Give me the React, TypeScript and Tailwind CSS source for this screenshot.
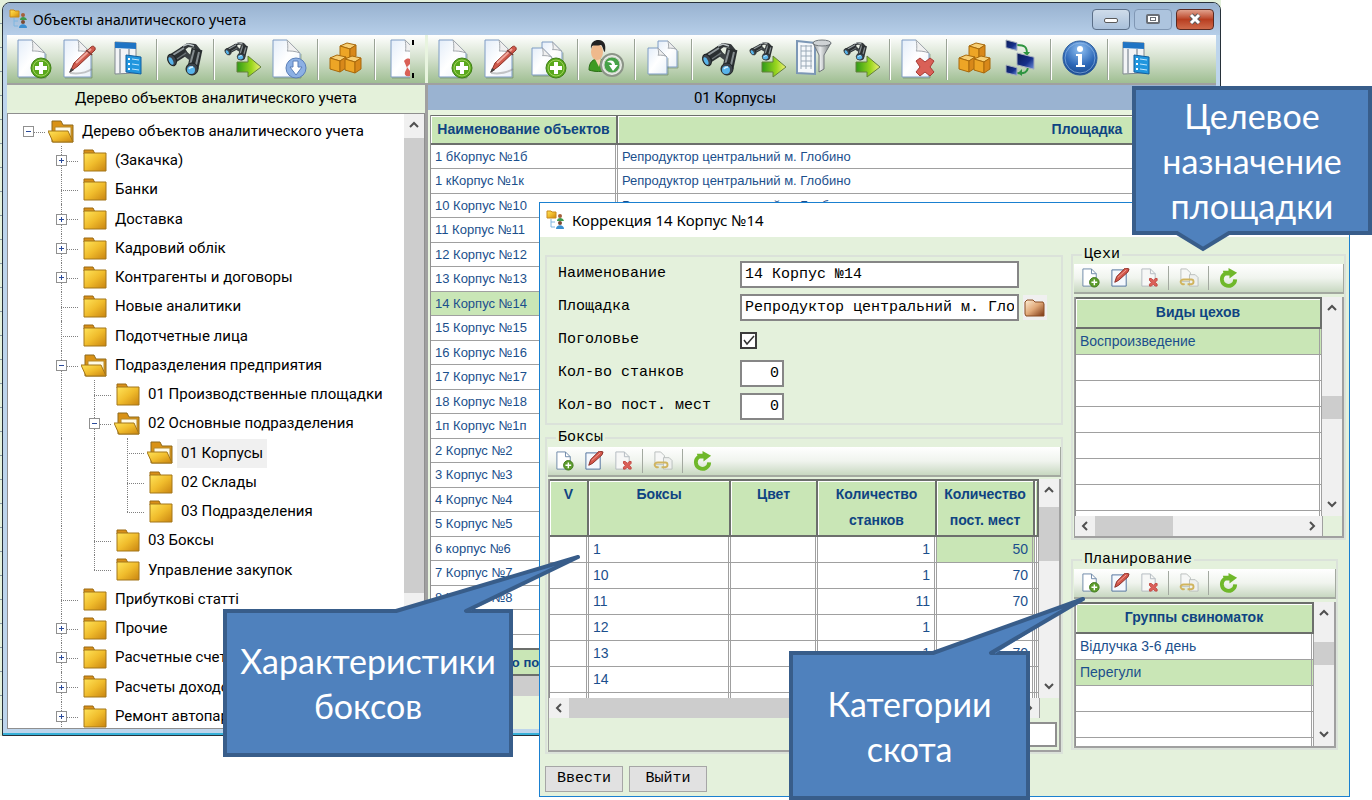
import type { ReactNode } from "react";
import { clsx } from "clsx";

type TreeItem = {
  label: string;
  level: number;
  state?: "open" | "closed";
  folder?: "open";
  guides?: number[];
  last?: boolean;
  selected?: boolean;
};

const TREE: TreeItem[] = [
  { label: "Дерево объектов аналитического учета", level: 0, state: "open", folder: "open" },
  { label: "(Закачка)", level: 1, state: "closed" },
  { label: "Банки", level: 1 },
  { label: "Доставка", level: 1, state: "closed" },
  { label: "Кадровий облік", level: 1, state: "closed" },
  { label: "Контрагенты и договоры", level: 1, state: "closed" },
  { label: "Новые аналитики", level: 1 },
  { label: "Подотчетные лица", level: 1 },
  { label: "Подразделения предприятия", level: 1, state: "open", folder: "open" },
  { label: "01 Производственные площадки", level: 2, guides: [1] },
  { label: "02 Основные подразделения", level: 2, state: "open", folder: "open", guides: [1] },
  { label: "01 Корпусы", level: 3, folder: "open", guides: [1, 2], selected: true },
  { label: "02 Склады", level: 3, guides: [1, 2] },
  { label: "03 Подразделения", level: 3, guides: [1, 2], last: true },
  { label: "03 Боксы", level: 2, guides: [1] },
  { label: "Управление закупок", level: 2, guides: [1], last: true },
  { label: "Прибуткові статті", level: 1 },
  { label: "Прочие", level: 1, state: "closed" },
  { label: "Расчетные счета", level: 1, state: "closed" },
  { label: "Расчеты доходов", level: 1, state: "closed" },
  { label: "Ремонт автопарка", level: 1, state: "closed" },
];

const SITE = "Репродуктор центральний м. Глобино";

const OBJECTS = [
  { name: "1 бКорпус №1б", site: SITE },
  { name: "1 кКорпус №1к", site: SITE },
  { name: "10 Корпус №10", site: SITE },
  { name: "11 Корпус №11" },
  { name: "12 Корпус №12" },
  { name: "13 Корпус №13" },
  { name: "14 Корпус №14", selected: true },
  { name: "15 Корпус №15" },
  { name: "16 Корпус №16" },
  { name: "17 Корпус №17" },
  { name: "18 Корпус №18" },
  { name: "1п Корпус №1п" },
  { name: "2 Корпус №2" },
  { name: "3 Корпус №3" },
  { name: "4 Корпус №4" },
  { name: "5 Корпус №5" },
  { name: "6 корпус №6" },
  { name: "7 Корпус №7" },
  { name: "8 Корпус №8" },
  { name: "9 Корпус №9" },
  { name: "" },
];

const BOXES = [
  ["1", "1", "50"],
  ["10", "1", "70"],
  ["11", "11", "70"],
  ["12", "1", "70"],
  ["13", "1", "70"],
  ["14", "1", "70"],
  ["", "", ""],
];

/* ---------- icons ---------- */

function IconDefs() {
  return (
    <svg className="absolute size-0" aria-hidden="true">
      <defs>
        <linearGradient id="paper" x1="0" y1="0" x2="1" y2="1">
          <stop offset="0" stopColor="#e3edf9" />
          <stop offset="0.5" stopColor="#ffffff" />
          <stop offset="1" stopColor="#e9f0f8" />
        </linearGradient>
        <linearGradient id="folder" x1="0" y1="0" x2="1" y2="1">
          <stop offset="0" stopColor="#ffe45a" />
          <stop offset="0.5" stopColor="#f0bc2c" />
          <stop offset="1" stopColor="#c98410" />
        </linearGradient>
        <linearGradient id="leather" x1="0" y1="0" x2="1" y2="1">
          <stop offset="0" stopColor="#fff0d8" />
          <stop offset="0.5" stopColor="#e0a878" />
          <stop offset="1" stopColor="#7a3410" />
        </linearGradient>
        <linearGradient id="arrow" x1="0" y1="0" x2="1" y2="0">
          <stop offset="0" stopColor="#2f9a18" />
          <stop offset="0.6" stopColor="#9ad61e" />
          <stop offset="1" stopColor="#f2f27a" />
        </linearGradient>
        <linearGradient id="screen" x1="0" y1="0" x2="1" y2="1">
          <stop offset="0" stopColor="#0a1a55" />
          <stop offset="0.6" stopColor="#16308a" />
          <stop offset="1" stopColor="#6f92dd" />
        </linearGradient>
        <radialGradient id="info" cx="0.5" cy="0.25" r="0.8">
          <stop offset="0" stopColor="#8fc0f2" />
          <stop offset="0.6" stopColor="#2d68b8" />
          <stop offset="1" stopColor="#164488" />
        </radialGradient>
        <linearGradient id="steel" x1="0" y1="0" x2="1" y2="0">
          <stop offset="0" stopColor="#8b9092" />
          <stop offset="0.4" stopColor="#e9eced" />
          <stop offset="1" stopColor="#6f7577" />
        </linearGradient>
      </defs>
    </svg>
  );
}

function Page({ x = 3, y = 1, w = 27, h = 37 }: { x?: number; y?: number; w?: number; h?: number }) {
  const f = w * 0.48;
  return (
    <g strokeLinejoin="round">
      <path d={`M${x + 1} ${y + h + 1}h${w}v-${h - f}`} fill="none" stroke="#5c7556" strokeOpacity="0.5" />
      <path
        d={`M${x} ${y}h${w - f}l${f} ${f}v${h - f}h-${w}z`}
        fill="url(#paper)"
        stroke="#7f9cc4"
      />
      <path
        d={`M${x + w - f} ${y}c1 4 1 ${f - 2} 0 ${f - 2}c3 0 8 0 ${f} 2z`}
        fill="#f0f0f0"
        stroke="#a3a8ae"
      />
    </g>
  );
}

function PlusBadge({ cx = 26, cy = 29, r = 10 }: { cx?: number; cy?: number; r?: number }) {
  return (
    <g>
      <circle cx={cx} cy={cy} r={r} fill="#5aa81c" stroke="#3f7f16" />
      <circle cx={cx} cy={cy} r={r - 2} fill="none" stroke="#9fd05c" />
      <path d={`M${cx} ${cy - 6}v12M${cx - 6} ${cy}h12`} stroke="#fff" strokeWidth="4" />
    </g>
  );
}

function Pen() {
  return (
    <g>
      <path d="M8 34c8 1 16 0 22-4" fill="none" stroke="#777" strokeOpacity="0.4" strokeWidth="2" />
      <path d="M8 33l4-9L29 8c2-2 5 0 4 3L16 27z" fill="#cf5a4c" stroke="#8d3026" />
      <path d="M14 24L29 10" stroke="#f1a79c" strokeWidth="2" />
      <path d="M24 11l6 5" stroke="#7d3a34" strokeWidth="1.5" />
      <path d="M7 34l2-5 3 2z" fill="#444" />
    </g>
  );
}

function RedCross() {
  return (
    <path
      d="M17 22l4-3 5 4 5-4 4 3-4 6 4 5-4 4-5-4-5 4-4-4 4-5z"
      fill="#d96057"
      stroke="#a83c36"
    />
  );
}

function Glasses() {
  return (
    <g fill="none">
      <path d="M15 11l7-5 7 1 4 5" stroke="#33383a" strokeWidth="4" strokeLinejoin="round" />
      <path d="M20 11L6 20" stroke="#2a2f31" strokeWidth="10" />
      <path d="M31 10l-4 19" stroke="#2a2f31" strokeWidth="11" />
      <path d="M18 14l8 6" stroke="#3c4244" strokeWidth="5" />
      <path d="M18 9L7 16" stroke="#90989b" strokeWidth="2" />
      <path d="M20 14l-9 6" stroke="#6a7275" strokeWidth="1.5" />
      <path d="M28 11l-4 15M33 13l-3 13" stroke="#848c8f" strokeWidth="2" />
      <path d="M17 7l5-2 6 2" stroke="#bcc3c5" strokeWidth="1.500" />
      <ellipse cx="6" cy="21" rx="4" ry="6" transform="rotate(-25 6 21)" fill="#3c434a" stroke="#1d2224" />
      <ellipse cx="5" cy="22" rx="2" ry="4" transform="rotate(-25 5 22)" fill="#58b4ea" />
      <ellipse cx="26" cy="30" rx="6" ry="6" fill="#3c434a" stroke="#1d2224" />
      <ellipse cx="25" cy="31" rx="4" ry="4" fill="#58b4ea" />
      <path d="M23 30c1-2 2-2 4-2" stroke="#d5f0ff" strokeWidth="1.500" />
    </g>
  );
}

function FindNext() {
  return (
    <g>
      <g transform="translate(1 1) scale(0.66 0.56)">
        <Glasses />
      </g>
      <path d="M14 23h11v-6l13 11-13 10v-5H14z" fill="url(#arrow)" stroke="#64803c" />
    </g>
  );
}

function FormWindow() {
  return (
    <g>
      <path d="M6 3l21 1v30L6 35z" fill="#f2f4f6" stroke="#7f878f" />
      <path d="M6 3l21 1v6L6 9z" fill="#1f74c4" />
      <path d="M11 10v24M20 10v23" stroke="#aab2ba" strokeWidth="2" />
      <path d="M17 16l15 2v17l-15-2z" fill="#2196de" stroke="#125f9e" />
      <path d="M19 20h2M19 25h2M19 30h2" stroke="#fff" strokeWidth="2" />
      <path d="M23 20l7 1M23 25l7 1M23 30l7 1" stroke="#bfe6ff" />
    </g>
  );
}

function Cube({ x, y }: { x: number; y: number }) {
  return (
    <g stroke="#a8690c" strokeLinejoin="round">
      <path d={`M${x} ${y + 3}l7-3 9 2-6 4z`} fill="#f7cf74" />
      <path d={`M${x} ${y + 3}l10 3v11l-10-3z`} fill="#eda526" />
      <path d={`M${x + 10} ${y + 6}l6-4v11l-6 4z`} fill="#d8881a" />
    </g>
  );
}

function Cubes() {
  return (
    <g>
      <Cube x={13} y={4} />
      <Cube x={3} y={16} />
      <Cube x={18} y={17} />
    </g>
  );
}

function Monitor({ x, y, s }: { x: number; y: number; s: number }) {
  return (
    <path
      d={`M${x} ${y}l${s} ${s * 0.25}v${s * 0.7}l-${s} -${s * 0.25}z`}
      fill="url(#screen)"
      stroke="#a7b0be"
    />
  );
}

const ICONS: Record<string, ReactNode> = {
  add: (
    <>
      <Page />
      <PlusBadge />
    </>
  ),
  edit: (
    <>
      <Page x={2} />
      <Pen />
    </>
  ),
  form: <FormWindow />,
  find: <Glasses />,
  next: <FindNext />,
  down: (
    <>
      <Page />
      <circle cx="26" cy="29" r="10" fill="#8cb0e4" stroke="#5a7fb8" />
      <path d="M23 22h5v6h4l-6 8-6-8h3z" fill="#fff" stroke="#5a7fb8" />
    </>
  ),
  cubes: <Cubes />,
  multi: (
    <>
      <Page x={12} y={3} w={20} h={25} />
      <Page x={2} y={9} w={20} h={27} />
      <PlusBadge />
    </>
  ),
  user: (
    <>
      <path d="M2 31c0-8 4-11 9-11s10 3 10 11c-6 2-13 2-19 0z" fill="#3f9a22" stroke="#2b6d16" />
      <path d="M8 20h6l-2 8z" fill="#f6d2b0" />
      <ellipse cx="10" cy="13" rx="6" ry="8" fill="#efb98c" />
      <path d="M4 10C3 3 8 1 11 1s9 1 7 12c-2-1-2-6-4-7-4 1-7 0-9 1z" fill="#222" />
      <circle cx="25" cy="26" r="11" fill="#e8ece6" stroke="#8c9488" strokeWidth="2" />
      <circle cx="25" cy="26" r="8" fill="#45a147" stroke="#c8cfc4" />
      <path d="M20 23c4-3 8-1 8 3h3l-5 6-4-6h3c0-2-2-3-5-3" fill="#fff" />
    </>
  ),
  copy: (
    <>
      <Page x={14} y={2} w={19} h={26} />
      <Page x={4} y={9} w={19} h={26} />
    </>
  ),
  filter: (
    <>
      <path d="M2 2l18 2v31L2 34z" fill="#f5f8fb" stroke="#7c97b6" strokeWidth="2" />
      <path d="M6 7h11M6 12h11M6 17h11M6 22h11M6 27h11M6 6v24M11 6v24M16 6v24" stroke="#9aa9b8" />
      <path d="M18 4h18l-7 12v14l-5 3V16z" fill="url(#steel)" stroke="#70767a" />
      <ellipse cx="27" cy="4" rx="9" ry="3" fill="#cfd3d5" stroke="#70767a" />
    </>
  ),
  remove: (
    <>
      <Page />
      <RedCross />
    </>
  ),
  network: (
    <>
      <path d="M14 6c8 0 10 2 10 9M14 34c8 1 10-1 11-5" fill="none" stroke="#2e9440" strokeWidth="2" />
      <path d="M20 13h7l-3 4zM19 30v7l-4-3z" fill="#2e9440" />
      <Monitor x={3} y={1} s={11} />
      <Monitor x={14} y={14} s={17} />
      <Monitor x={3} y={26} s={11} />
    </>
  ),
  info: (
    <>
      <circle cx="20" cy="19" r="17" fill="url(#info)" stroke="#2d5d9c" />
      <circle cx="20" cy="19" r="15" fill="none" stroke="#9cc1ea" strokeOpacity="0.6" />
      <circle cx="20" cy="10" r="3" fill="#fff" />
      <path d="M16 15h6v11h3v2h-9v-2h2V17h-2z" fill="#fff" />
    </>
  ),
};

const LABELS: Record<string, string> = {
  add: "Добавить",
  edit: "Изменить",
  form: "Карточка",
  find: "Найти",
  next: "Найти далее",
  down: "Загрузить",
  cubes: "Аналитики",
  multi: "Добавить группу",
  user: "Сотрудник",
  copy: "Копировать",
  filter: "Фильтр",
  remove: "Удалить",
  network: "Связи",
  info: "Информация",
};

function Toolbar({ items, children }: { items: string[]; children?: ReactNode }) {
  return (
    <div className="flex h-12 items-center overflow-hidden bg-linear-to-b from-white via-[#d3e0cc] to-[#9fbe92] pl-1">
      {items.map((item, i) =>
        item === "|" ? (
          <span key={i} className="mr-[5px] ml-1 h-[41px] w-px shrink-0 bg-[#9aa396] shadow-[1px_0_0_#fff]" />
        ) : (
          <button key={i} type="button" aria-label={LABELS[item]} className="flex w-[47px] shrink-0 justify-center">
            <svg viewBox="0 0 40 40" className="size-10">
              {ICONS[item]}
            </svg>
          </button>
        ),
      )}
      {children}
    </div>
  );
}

const SMALL_ICONS: [string, ReactNode][] = [
  [
    "Добавить",
    <>
      <path d="M2 1h9l5 5v13H2z" fill="#fff" stroke="#6d87a8" />
      <path d="M11 1v5h5" fill="none" stroke="#6d87a8" />
      <circle cx="14" cy="15" r="5" fill="#5c9c2c" stroke="#417a1c" />
      <path d="M14 12v6M11 15h6" stroke="#fff" strokeWidth="1.5" />
    </>,
  ],
  [
    "Изменить",
    <>
      <path d="M2 2h15v17H2z" fill="#f4f8fd" stroke="#50719c" />
      <path d="M5 15l2-6L16 0l4 1-1 3-10 9z" fill="#d4574b" stroke="#8a2d25" />
      <path d="M8 10l9-8" stroke="#f0a096" />
    </>,
  ],
  [
    "Удалить",
    <>
      <path d="M3 1h9l5 5v13H3z" fill="#f6f7f6" stroke="#b3bbc0" />
      <path d="M12 1v5h5" fill="none" stroke="#b3bbc0" />
      <path d="M11 11h2l2 2 2-2h2v2l-2 2 2 2v2h-2l-2-2-2 2h-2v-2l2-2-2-2z" fill="#dc6059" stroke="#c04840" />
    </>,
  ],
  ["|", null],
  [
    "Связать",
    <>
      <path d="M2 1h6l4 4v9H2z" fill="#f6f7f6" stroke="#b9bfbd" />
      <path d="M11 7h6l3 3v9h-9z" fill="#eef0ee" stroke="#b9bfbd" />
      <path d="M6 17c-5 1-6-5-1-5h4M8 12h5c3 0 3 5 0 5H9" fill="none" stroke="#d0b45e" strokeWidth="2" />
    </>,
  ],
  ["|", null],
  [
    "Обновить",
    <>
      <path d="M6 6a7 7 0 1 0 11 6" fill="none" stroke="#6fb82a" strokeWidth="4" />
      <path d="M4 3h6V0l9 5-8 6V8H6z" fill="#6fb82a" />
    </>,
  ],
];

function SmallToolbar() {
  return (
    <div className="flex h-[30px] items-center border-r border-b-2 border-[#a3a9a0] bg-linear-to-b from-white via-[#f0f4ee] to-[#c8d8c1] pl-0.5">
      {SMALL_ICONS.map(([label, icon], i) =>
        label === "|" ? (
          <span key={i} className="mx-[5px] h-6 w-px bg-[#a3a9a0]" />
        ) : (
          <button key={i} type="button" aria-label={label} className="flex w-[29px] justify-center">
            <svg viewBox="0 0 21 21" className="size-5">
              {icon}
            </svg>
          </button>
        ),
      )}
    </div>
  );
}

function AppIcon() {
  return (
    <svg viewBox="0 0 20 20" className="size-5 shrink-0">
      <path d="M1 1h4l1 1h4v6H1z" fill="url(#folder)" stroke="#c98a1c" />
      <path d="M5 9v8h4M5 12h4" fill="none" stroke="#7fb6e0" />
      <circle cx="14" cy="6" r="2" fill="#a5603a" />
      <path d="M11 11c0-4 6-4 7 0z" fill="#3c9a4a" />
      <circle cx="14" cy="13" r="2" fill="#7a4a32" />
      <path d="M10 19c0-5 8-5 8 0z" fill="#3a8fd0" />
    </svg>
  );
}

function Folder({ open }: { open?: boolean }) {
  return (
    <svg viewBox="0 0 27 24" className="h-6 w-[27px]">
      {open ? (
        <>
          <path d="M4 1h9l2 4h10v17H4z" fill="#d99216" stroke="#8f6a1c" />
          <path d="M7 7h16v12H7z" fill="#fffbe8" stroke="#b58a2a" />
          <path d="M0 11h20l5 11H5z" fill="url(#folder)" stroke="#a3761a" />
        </>
      ) : (
        <>
          <path d="M3 1h9l2 4H3z" fill="#d98f18" stroke="#9a6a14" />
          <path d="M3 4h22v18H3z" fill="url(#folder)" stroke="#a3761a" />
        </>
      )}
    </svg>
  );
}

/* ---------- building blocks ---------- */

function Arrow({ dir }: { dir: "up" | "down" | "left" | "right" }) {
  const d = {
    up: "M3 8l4-4 4 4",
    down: "M3 5l4 4 4-4",
    left: "M9 3L5 7l4 4",
    right: "M5 3l4 4-4 4",
  }[dir];
  return (
    <svg viewBox="0 0 14 14" className="size-3.5 shrink-0">
      <path d={d} fill="none" stroke="#505050" strokeWidth="2" />
    </svg>
  );
}

function VScroll({ thumb }: { thumb: string }) {
  return (
    <div className="flex w-5 shrink-0 flex-col items-center bg-[#f0f0f0]">
      <div className="flex h-6 items-center">
        <Arrow dir="up" />
      </div>
      <div className="flex w-full flex-1 flex-col">
        <div className={clsx("w-full bg-[#cdcdcd]", thumb)} />
      </div>
      <div className="flex h-6 items-center">
        <Arrow dir="down" />
      </div>
    </div>
  );
}

function HScroll({ thumb }: { thumb: string }) {
  return (
    <div className="flex h-5 flex-1 items-center bg-[#f0f0f0]">
      <div className="flex w-5 justify-center">
        <Arrow dir="left" />
      </div>
      <div className="h-full flex-1">
        <div className={clsx("h-full bg-[#cdcdcd]", thumb)} />
      </div>
      <div className="flex w-5 justify-center">
        <Arrow dir="right" />
      </div>
    </div>
  );
}

function Th({ children, className }: { children?: ReactNode; className?: string }) {
  return (
    <th
      className={clsx(
        "border-r-2 border-b-2 border-[#6c6f6c] bg-[#c9e6b6] px-0 align-top leading-[26px] font-bold text-[#0f4482] shadow-[inset_1px_1px_0_#fff]",
        className,
      )}
    >
      {children}
    </th>
  );
}

function Td({ children, className }: { children?: ReactNode; className?: string }) {
  return (
    <td
      className={clsx(
        "overflow-hidden border-r-[3px] border-b border-r-[#a0a0a0] border-b-[#a0a0a0] px-1 whitespace-nowrap [border-right-style:double]",
        className,
      )}
    >
      {children}
    </td>
  );
}

function TreeRow({ item }: { item: TreeItem }) {
  const guides = item.guides ?? [];
  return (
    <li className="flex h-[29px] shrink-0 items-center [&:nth-child(4n)]:h-[30px]">
      {Array.from({ length: item.level }, (_, i) => (
        <span key={i} className="relative w-[33px] shrink-0 self-stretch">
          {guides.includes(i) && (
            <span className="absolute inset-y-0 left-4 border-l border-dotted border-[#808080]" />
          )}
        </span>
      ))}
      <span className="relative flex w-[33px] shrink-0 items-center justify-center self-stretch">
        {item.level > 0 && (
          <span
            className={clsx(
              "absolute top-0 left-4 border-l border-dotted border-[#808080]",
              item.last ? "h-1/2" : "h-full",
            )}
          />
        )}
        <span className="absolute top-1/2 right-0 left-4 border-t border-dotted border-[#808080]" />
        {item.state && (
          <button
            type="button"
            aria-label={item.state === "open" ? "Свернуть" : "Развернуть"}
            className="relative size-[11px] border border-[#909090] bg-white"
          >
            <svg viewBox="0 0 9 9" className="size-[9px]">
              <path d={item.state === "open" ? "M2 4.500h5" : "M2 4.500h5M4.500 2v5"} stroke="#2a4a9a" />
            </svg>
          </button>
        )}
      </span>
      <span className="relative flex w-[33px] shrink-0 justify-center">
        <Folder open={item.folder === "open"} />
      </span>
      <span className={clsx("px-1 leading-[29px] whitespace-nowrap", item.selected && "bg-[#f0f0f0]")}>
        {item.label}
      </span>
    </li>
  );
}

function ObjectsWindow() {
  return (
    <div className="absolute top-0 right-[151px] left-0 bg-[repeating-linear-gradient(#e4f1dc_0_23px,#8a9aa8_23px_24px)] pt-0.5 pl-0.5">
      <div className="overflow-hidden rounded-t-lg border border-[#27313a] bg-[#bdd5ec]">
        <header className="flex h-8 items-center bg-linear-to-b from-[#98b2d0] to-[#b6cee8] pr-1.5 pl-1.5 font-['Noto_Sans','Open_Sans',sans-serif] text-[14px]">
          <AppIcon />
          <h1 className="flex-1 pl-1">Объекты аналитического учета</h1>
          <div className="flex gap-1">
            <button type="button" aria-label="Свернуть" className="flex h-[21px] w-[38px] items-center justify-center rounded-sm border border-[#5b6f88] bg-linear-to-b from-[#cfdcea] to-[#a9c0da]">
              <span className="mt-0.5 h-[5px] w-3.5 rounded-xs border border-[#5a5a5a] bg-white" />
            </button>
            <button type="button" aria-label="Развернуть" className="flex h-[21px] w-[38px] items-center justify-center rounded-sm border border-[#8097b4] bg-[#adc4de]">
              <span className="flex h-2.5 w-3.5 items-center justify-center rounded-xs border-2 border-[#6a6f76] bg-white">
                <span className="h-1 w-1.5 border border-[#6a6f76]" />
              </span>
            </button>
            <button type="button" aria-label="Закрыть" className="flex h-[21px] w-[38px] items-center justify-center rounded-sm border border-[#5a2a22] bg-linear-to-b from-[#e0a08c] via-[#b83e20] to-[#cf6a4a]">
              <svg viewBox="0 0 14 12" className="h-3 w-3.5">
                <path d="M3 2l8 8M11 2l-8 8" stroke="#5c5c5c" strokeWidth="5" />
                <path d="M3 2l8 8M11 2l-8 8" stroke="#fff" strokeWidth="3" />
              </svg>
            </button>
          </div>
        </header>

        <div className="mx-1 mb-1 flex bg-[#e8f4df]">
          <section className="flex w-[418px] shrink-0 flex-col font-['Roboto','Noto_Sans',sans-serif] text-[15px]">
            <Toolbar items={["add", "edit", "form", "|", "find", "|", "next", "down", "|", "cubes", "|"]}>
              <button type="button" aria-label="Удалить" className="flex w-[30px] shrink-0 justify-end overflow-hidden">
                <svg viewBox="0 0 20 40" className="h-10 w-5">
                  <Page x={1} />
                  <path d="M14 22c3-4 6-2 6-2v5l-3 3 3 4v5c-4 1-6-1-5-4l2-4z" fill="#d96057" />
                </svg>
              </button>
              <span className="ml-0.5 flex h-[38px] flex-col justify-between">
                <span className="h-[5px] w-0.5 bg-black" />
                <span className="h-[5px] w-0.5 bg-black" />
              </span>
            </Toolbar>
            <h2 className="h-[27px] border-t-2 border-[#a0a0a0] bg-[#e4f1da] text-center leading-[26px]">
              Дерево объектов аналитического учета
            </h2>
            <div className="mt-[3px] flex h-[616px] overflow-hidden border border-[#8f8f8f] bg-white">
              <ul className="flex min-w-0 flex-1 flex-col overflow-hidden pt-[3px] pl-1">
                {TREE.map((item) => (
                  <TreeRow key={item.label} item={item} />
                ))}
              </ul>
              <VScroll thumb="h-[455px]" />
            </div>
          </section>

          <div className="mt-12 w-[3px] shrink-0 bg-[#a0a0a0]" />

          <section className="flex min-w-0 flex-1 flex-col">
            <Toolbar
              items={[
                "add", "edit", "multi", "|", "user", "|", "copy", "|", "find", "next", "filter", "next", "|",
                "remove", "|", "cubes", "network", "|", "info", "|", "form",
              ]}
            />
            <h2 className="h-[27px] border-t-2 border-[#a0a0a0] bg-[#9ab3d1] pr-[174px] text-center font-['Roboto','Noto_Sans',sans-serif] text-[15px] leading-[26px]">
              01 Корпусы
            </h2>
            <div className="mt-[5px] ml-0.5 h-[533px] overflow-hidden border-l border-[#8f8f8f] bg-white">
              <table className="w-full table-fixed border-separate border-spacing-0 border-t border-[#6c6f6c] text-[13px] text-[#1b4f8c]">
                <colgroup>
                  <col className="w-[187px]" />
                  <col />
                </colgroup>
                <thead>
                  <tr className="h-[29px] text-[14px]">
                    <Th>Наименование объектов</Th>
                    <Th className="pl-[342px]">Площадка</Th>
                  </tr>
                </thead>
                <tbody>
                  {OBJECTS.map((row) => (
                    <tr key={row.name} className={clsx("h-6 even:h-[25px]", row.selected && "bg-[#c9e6b6]")}>
                      <Td>{row.name}</Td>
                      <Td>{row.site}</Td>
                    </tr>
                  ))}
                </tbody>
              </table>
            </div>
            <div className="ml-0.5 h-7 border-y-2 border-[#6c6f6c] bg-[#c9e6b6] pl-3.5 font-bold text-[#0f4482]">
              <span className="text-[13px] leading-6">Количество по</span>
            </div>
            <div className="ml-0.5 h-5 bg-[#cdcdcd]" />
          </section>
        </div>
        <div className="h-0.5 bg-[#36b0d8]" />
      </div>
    </div>
  );
}

function Field({ id, label, children }: { id: string; label: string; children: ReactNode }) {
  return (
    <div className="flex h-[33px] items-center">
      <label htmlFor={id} className="w-[182px] shrink-0">
        {label}
      </label>
      {children}
    </div>
  );
}

function Group({ title, className, children }: { title: string; className?: string; children: ReactNode }) {
  return (
    <fieldset className={clsx("min-w-0 border-2 border-[#dbe2da] pl-px", className)}>
      <legend className="ml-2 px-0.5 leading-[18px]">{title}</legend>
      {children}
    </fieldset>
  );
}

function BoxesGrid() {
  return (
    <div className="mt-0.5 border-r-2 border-b-2 border-l border-[#a0a0a0]">
      <div className="flex h-[219px]">
        <div className="min-w-0 flex-1 overflow-hidden border-l border-[#8f8f8f] bg-white">
          <table className="w-full table-fixed border-separate border-spacing-0 border-t-2 border-[#6c6f6c] font-['Liberation_Sans',Arial,sans-serif] text-[14px] text-[#1b4f8c]">
            <colgroup>
              <col className="w-[39px]" />
              <col className="w-[142px]" />
              <col className="w-[87px]" />
              <col className="w-[119px]" />
              <col className="w-[98px]" />
              <col />
            </colgroup>
            <thead>
              <tr className="h-14">
                <Th>V</Th>
                <Th>Боксы</Th>
                <Th>Цвет</Th>
                <Th>
                  Количество
                  <br />
                  станков
                </Th>
                <Th>
                  Количество
                  <br />
                  пост. мест
                </Th>
                <Th />
              </tr>
            </thead>
            <tbody>
              {BOXES.map(([box, stalls, places], i) => (
                <tr key={i} className="h-[26px]">
                  <Td />
                  <Td>{box}</Td>
                  <Td />
                  <Td className="text-right">{stalls}</Td>
                  <Td className={clsx("text-right", i === 0 && "bg-[#c9e6b6]")}>{places}</Td>
                  <Td />
                </tr>
              ))}
            </tbody>
          </table>
        </div>
        <VScroll thumb="mt-1 h-[54px]" />
      </div>
      <div className="flex">
        <HScroll thumb="w-[300px]" />
        <div className="w-5 border-l border-[#a0a0a0]" />
      </div>
      <div className="flex h-8 items-center justify-end pr-0.5">
        <input aria-label="Итого" className="h-[25px] w-40 border-2 border-[#8f8f8f] bg-white px-1" />
      </div>
    </div>
  );
}

function ListGrid({
  title,
  rows,
  selected,
  height,
  thumb,
  scroll,
}: {
  title: string;
  rows: string[];
  selected: number;
  height: string;
  thumb: string;
  scroll?: boolean;
}) {
  return (
    <div className="mt-[3px] border-r-2 border-b-2 border-l border-[#a0a0a0]">
      <div className={clsx("flex", height)}>
        <div className="min-w-0 flex-1 overflow-hidden border-l border-[#8f8f8f] bg-white">
          <table className="w-full table-fixed border-separate border-spacing-0 border-t-2 border-[#6c6f6c] font-['Liberation_Sans',Arial,sans-serif] text-[14px] text-[#1b4f8c]">
            <thead>
              <tr className="h-[30px]">
                <Th>{title}</Th>
              </tr>
            </thead>
            <tbody>
              {rows.map((row, i) => (
                <tr key={i} className={clsx("h-[26px]", i === selected && "bg-[#c9e6b6]")}>
                  <Td>{row}</Td>
                </tr>
              ))}
            </tbody>
          </table>
        </div>
        <VScroll thumb={thumb} />
      </div>
      {scroll && (
        <div className="flex">
          <HScroll thumb="w-[78px]" />
          <div className="w-5 border-l border-[#a0a0a0]" />
        </div>
      )}
    </div>
  );
}

function EditDialog() {
  const box = "h-[27px] border-2 border-[#868686] bg-white px-[3px] text-black";
  return (
    <div
      role="dialog"
      aria-labelledby="dialog-title"
      className="absolute top-[202px] right-[22px] left-[539px] border border-[#1a80d0] bg-[#e4f1dc] font-['Courier_New','Liberation_Mono',monospace] text-[15px]"
    >
      <header className="flex h-[34px] items-center bg-white pl-1.5 font-['Noto_Sans','Open_Sans',sans-serif] text-[15px]">
        <AppIcon />
        <h2 id="dialog-title" className="pl-1.5">
          Коррекция 14 Корпус №14
        </h2>
      </header>
      <div className="grid grid-cols-[1fr_275px] gap-2 pr-[3px] pl-[5px]">
        <div className="min-w-0 pt-[18px]">
          <div className="border-2 border-[#dbe2da] pt-px pl-[11px]">
            <Field id="name" label="Наименование">
              <input id="name" defaultValue="14 Корпус №14" className={clsx(box, "w-[279px]")} />
            </Field>
            <Field id="site" label="Площадка">
              <input id="site" defaultValue="Репродуктор центральний м. Гло" className={clsx(box, "w-[279px]")} />
              <button type="button" aria-label="Выбрать площадку" className="ml-1 flex h-[25px] w-6 items-center justify-center bg-[#f0f0f0]">
                <svg viewBox="0 0 22 18" className="h-[18px] w-[22px]">
                  <path d="M1 3l2-2h6l2 2h8l1 2v12H2L1 15z" fill="url(#leather)" stroke="#8a4c22" />
                </svg>
              </button>
            </Field>
            <Field id="livestock" label="Поголовье">
              <span className="relative size-[17px]">
                <input id="livestock" type="checkbox" defaultChecked className="peer block size-[17px] appearance-none border-2 border-[#3c3c3c] bg-white" />
                <svg viewBox="0 0 17 17" className="pointer-events-none absolute inset-0 hidden peer-checked:block">
                  <path d="M4 8l3 4 7-8" fill="none" stroke="#333" strokeWidth="1.500" />
                </svg>
              </span>
            </Field>
            <Field id="stalls" label="Кол-во станков">
              <input id="stalls" defaultValue="0" className={clsx(box, "w-11 text-right")} />
            </Field>
            <Field id="places" label="Кол-во пост. мест">
              <input id="places" defaultValue="0" className={clsx(box, "w-11 text-right")} />
            </Field>
          </div>
          <Group title="Боксы" className="mt-1">
            <SmallToolbar />
            <BoxesGrid />
          </Group>
          <div className="mt-3 mb-1 flex gap-1.5">
            <button type="button" className="h-[26px] w-[78px] border border-[#a6a6a6] bg-[#e1e1e1]">
              Ввести
            </button>
            <button type="button" className="h-[26px] w-[78px] border border-[#a6a6a6] bg-[#e1e1e1]">
              Выйти
            </button>
          </div>
        </div>
        <div className="min-w-0 pt-[9px]">
          <Group title="Цехи">
            <SmallToolbar />
            <ListGrid
              title="Виды цехов"
              rows={["Воспроизведение", "", "", "", "", "", "", ""]}
              selected={0}
              height="h-[219px]"
              thumb="mt-[75px] h-[23px]"
              scroll
            />
          </Group>
          <Group title="Планирование" className="mt-[11px] mr-2">
            <SmallToolbar />
            <ListGrid
              title="Группы свиноматок"
              rows={["Відлучка 3-6 день", "Перегули", "", "", ""]}
              selected={1}
              height="h-36"
              thumb="mt-4 h-[23px]"
            />
          </Group>
        </div>
      </div>
    </div>
  );
}

function Callout({ className, tail, children }: { className: string; tail: ReactNode; children: ReactNode }) {
  return (
    <div
      className={clsx(
        "absolute flex items-center justify-center border-4 border-[#385d8a] bg-[#4f81bd] text-center font-['Lato','Noto_Sans',sans-serif] text-[34px] leading-[45px] text-white",
        className,
      )}
    >
      {tail}
      <p>{children}</p>
    </div>
  );
}

export default function App() {
  return (
    <main className="relative min-h-screen overflow-hidden bg-white font-['Liberation_Sans',Arial,sans-serif] text-black">
      <IconDefs />
      <ObjectsWindow />
      <EditDialog />
      <Callout
        className="top-[86px] right-0 h-[149px] w-60"
        tail={
          <svg viewBox="0 0 60 24" className="absolute top-full left-[37px] -mt-px h-6 w-[60px]">
            <path d="M3 0v3l27 16 27-16V0z" fill="#4f81bd" />
            <path d="M1 3h3l26 16 26-16h3" fill="none" stroke="#385d8a" strokeWidth="4" />
          </svg>
        }
      >
        Целевое
        <br />
        назначение
        <br />
        площадки
      </Callout>
      <Callout
        className="top-[609px] left-[223px] h-[148px] w-[290px]"
        tail={
          <svg viewBox="0 0 190 60" className="absolute bottom-full left-[165px] h-[60px] w-[190px]">
            <path d="M2 60L186 4 74 60z" fill="#4f81bd" />
            <path d="M0 58h4L186 4 74 58h4" fill="none" stroke="#385d8a" strokeWidth="4" strokeLinejoin="round" />
          </svg>
        }
      >
        Характеристики
        <br />
        боксов
      </Callout>
      <Callout
        className="top-[651px] left-[789px] h-[149px] w-[241px]"
        tail={
          <svg viewBox="0 0 160 60" className="absolute bottom-full left-[136px] h-[60px] w-[160px]">
            <path d="M2 60L154 4 64 60z" fill="#4f81bd" />
            <path d="M0 58h4L154 4 62 58h4" fill="none" stroke="#385d8a" strokeWidth="4" strokeLinejoin="round" />
          </svg>
        }
      >
        Категории
        <br />
        скота
      </Callout>
    </main>
  );
}
